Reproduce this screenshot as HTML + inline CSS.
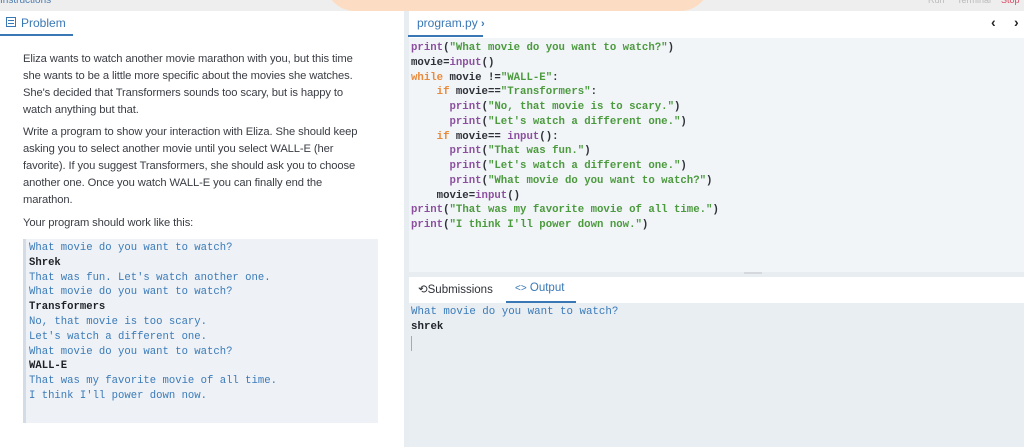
<!DOCTYPE html>
<html><head><meta charset="utf-8"><style>
*{margin:0;padding:0;box-sizing:border-box}
body{width:1024px;height:447px;overflow:hidden;background:#fff;font-family:"Liberation Sans",sans-serif;position:relative}
.top{position:absolute;left:0;top:0;width:1024px;height:11px;background:#eeeeee}
.blob{position:absolute;left:325px;top:-20px;width:385px;height:31px;background:#fcdcc2;border-radius:0 0 30px 30px}
.abs{position:absolute;white-space:pre}
.mono{font-family:"Liberation Mono",monospace}
.p{color:#8b4f9e}.s{color:#4c9a3e}.k{color:#e98a3b}.b{color:#1f2128;font-weight:bold}
.prose{position:absolute;left:23px;font-size:11.2px;color:#3a3d44;line-height:17px;white-space:pre;letter-spacing:-0.1px}
</style></head><body>
<div class="top"></div><div class="blob"></div>
<div class="abs" style="left:0;top:-5px;font-size:10px;color:#4a7ab0">Instructions</div>
<div class="abs" style="left:928px;top:-5px;font-size:9px;color:#bbb">Run</div>
<div class="abs" style="left:957px;top:-5px;font-size:9px;color:#bbb">Terminal</div>
<div class="abs" style="left:1001px;top:-5px;font-size:9px;color:#d9455f">Stop</div>

<div class="abs" style="left:6px;top:17px;width:10px;height:10px;border:1.5px solid #3a78b5"></div>
<div class="abs" style="left:8px;top:20px;width:6px;height:1px;background:#3a78b5"></div>
<div class="abs" style="left:8px;top:23px;width:6px;height:1px;background:#3a78b5"></div>
<div class="abs" style="left:21px;top:16px;font-size:12px;color:#3a78b5">Problem</div>
<div class="abs" style="left:0;top:34px;width:73px;height:2px;background:#3a78b5"></div>
<div class="prose" style="top:51px">Eliza wants to watch another movie marathon with you, but this time
she wants to be a little more specific about the movies she watches.
She's decided that Transformers sounds too scary, but is happy to
watch anything but that.</div>
<div class="prose" style="top:124px">Write a program to show your interaction with Eliza. She should keep
asking you to select another movie until you select WALL-E (her
favorite). If you suggest Transformers, she should ask you to choose
another one. Once you watch WALL-E you can finally end the
marathon.</div>
<div class="prose" style="top:215px">Your program should work like this:</div>
<div class="abs" style="left:23px;top:239px;width:355px;height:184px;background:#eef2f6;border-left:3px solid #d3dce6"></div>
<div class="abs mono" style="left:29px;top:241px;font-size:10.6px;line-height:14.8px;color:#3a7ab8">What movie do you want to watch?
<span class="b">Shrek</span>
That was fun. Let's watch another one.
What movie do you want to watch?
<span class="b">Transformers</span>
No, that movie is too scary.
Let's watch a different one.
What movie do you want to watch?
<span class="b">WALL-E</span>
That was my favorite movie of all time.
I think I'll power down now.</div>

<div class="abs" style="left:404px;top:11px;width:5px;height:436px;background:#e8edf1"></div>
<div class="abs" style="left:409px;top:38px;width:615px;height:234px;background:#f1f5f8"></div>
<div class="abs" style="left:409px;top:272px;width:615px;height:5px;background:#e8edf1"></div>
<div class="abs" style="left:744px;top:272px;width:18px;height:2px;background:#d5d9dd"></div>
<div class="abs" style="left:417px;top:16px;font-size:12px;color:#3a78b5">program.py <b style="font-size:11px;color:#3a78b5">&#x203A;</b></div>
<div class="abs" style="left:408px;top:35px;width:75px;height:2px;background:#3a78b5"></div>
<div class="abs" style="left:991px;top:14px;font-size:14px;font-weight:bold;color:#222">&#x2039;</div>
<div class="abs" style="left:1014px;top:14px;font-size:14px;font-weight:bold;color:#222">&#x203A;</div>
<div class="abs mono" style="left:411px;top:41px;font-size:10.7px;line-height:14.75px;font-weight:bold;color:#2f3138"><span class="p">print</span>(<span class="s">"What movie do you want to watch?"</span>)
movie=<span class="p">input</span>()
<span class="k">while</span> movie !=<span class="s">"WALL-E"</span>:
    <span class="k">if</span> movie==<span class="s">"Transformers"</span>:
      <span class="p">print</span>(<span class="s">"No, that movie is to scary."</span>)
      <span class="p">print</span>(<span class="s">"Let's watch a different one."</span>)
    <span class="k">if</span> movie== <span class="p">input</span>():
      <span class="p">print</span>(<span class="s">"That was fun."</span>)
      <span class="p">print</span>(<span class="s">"Let's watch a different one."</span>)
      <span class="p">print</span>(<span class="s">"What movie do you want to watch?"</span>)
    movie=<span class="p">input</span>()
<span class="p">print</span>(<span class="s">"That was my favorite movie of all time."</span>)
<span class="p">print</span>(<span class="s">"I think I'll power down now."</span>)</div>

<div class="abs" style="left:409px;top:303px;width:615px;height:144px;background:#e9eef3"></div>
<div class="abs" style="left:418px;top:282px;font-size:11.5px;color:#2f3138">&#x27F2;Submissions</div>
<div class="abs" style="left:515px;top:282px;font-size:11.5px;color:#3a78b5"><span style="font-size:10px">&lt;&gt;</span> Output</div>
<div class="abs" style="left:506px;top:301px;width:70px;height:2px;background:#3a78b5"></div>
<div class="abs mono" style="left:411px;top:305px;font-size:10.8px;line-height:14.8px;color:#3a7ab8">What movie do you want to watch?
<span class="b">shrek</span></div>
<div class="abs" style="left:411px;top:336px;width:1px;height:15px;background:#aaa"></div>
</body></html>
